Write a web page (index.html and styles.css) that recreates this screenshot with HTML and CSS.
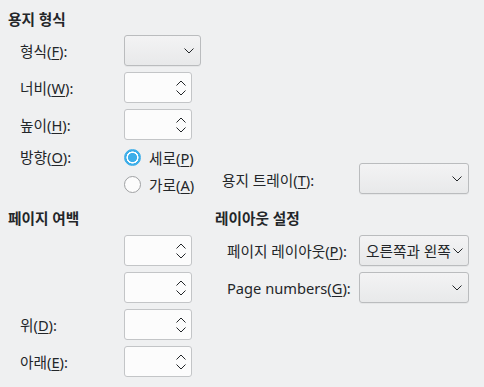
FILE: index.html
```html
<!DOCTYPE html>
<html lang="ko">
<head>
<meta charset="utf-8">
<title>페이지 설정</title>
<link rel="stylesheet" href="styles.css">
</head>
<body>
<div class="page">
  <section class="paper">
    <h2 class="heading">용지 형식</h2>
    <div class="paper-body">
      <div class="form paper-form">
        <div class="label">형식(<u>F</u>):</div>
        <div class="combo w77"><svg class="chev" width="10" height="6" viewBox="0 0 10 6"><path d="M0.5 0.5 L5 5 L9.5 0.5" fill="none" stroke="#232629" stroke-width="1"/></svg></div>

        <div class="label">너비(<u>W</u>):</div>
        <div class="spin"><svg width="10" height="6" viewBox="0 0 10 6"><path d="M0.5 5.5 L5 1 L9.5 5.5" fill="none" stroke="#232629" stroke-width="1"/></svg><svg width="10" height="6" viewBox="0 0 10 6"><path d="M0.5 0.5 L5 5 L9.5 0.5" fill="none" stroke="#232629" stroke-width="1"/></svg></div>

        <div class="label">높이(<u>H</u>):</div>
        <div class="spin"><svg width="10" height="6" viewBox="0 0 10 6"><path d="M0.5 5.5 L5 1 L9.5 5.5" fill="none" stroke="#232629" stroke-width="1"/></svg><svg width="10" height="6" viewBox="0 0 10 6"><path d="M0.5 0.5 L5 5 L9.5 0.5" fill="none" stroke="#232629" stroke-width="1"/></svg></div>

        <div class="label top">방향(<u>O</u>):</div>
        <div class="radios">
          <div class="radio-row"><span class="radio on"></span><span>세로(<u>P</u>)</span></div>
          <div class="radio-row"><span class="radio"></span><span>가로(<u>A</u>)</span></div>
        </div>
      </div>
      <div class="tray">
        <div class="tray-label">용지 트레이(<u>T</u>):</div>
        <div class="combo w110"><svg class="chev" width="10" height="6" viewBox="0 0 10 6"><path d="M0.5 0.5 L5 5 L9.5 0.5" fill="none" stroke="#232629" stroke-width="1"/></svg></div>
      </div>
    </div>
  </section>

  <div class="bottom">
    <section class="margins">
      <h2 class="heading">페이지 여백</h2>
      <div class="form margin-form">
        <div class="label"></div>
        <div class="spin"><svg width="10" height="6" viewBox="0 0 10 6"><path d="M0.5 5.5 L5 1 L9.5 5.5" fill="none" stroke="#232629" stroke-width="1"/></svg><svg width="10" height="6" viewBox="0 0 10 6"><path d="M0.5 0.5 L5 5 L9.5 0.5" fill="none" stroke="#232629" stroke-width="1"/></svg></div>

        <div class="label"></div>
        <div class="spin"><svg width="10" height="6" viewBox="0 0 10 6"><path d="M0.5 5.5 L5 1 L9.5 5.5" fill="none" stroke="#232629" stroke-width="1"/></svg><svg width="10" height="6" viewBox="0 0 10 6"><path d="M0.5 0.5 L5 5 L9.5 0.5" fill="none" stroke="#232629" stroke-width="1"/></svg></div>

        <div class="label">위(<u>D</u>):</div>
        <div class="spin"><svg width="10" height="6" viewBox="0 0 10 6"><path d="M0.5 5.5 L5 1 L9.5 5.5" fill="none" stroke="#232629" stroke-width="1"/></svg><svg width="10" height="6" viewBox="0 0 10 6"><path d="M0.5 0.5 L5 5 L9.5 0.5" fill="none" stroke="#232629" stroke-width="1"/></svg></div>

        <div class="label">아래(<u>E</u>):</div>
        <div class="spin"><svg width="10" height="6" viewBox="0 0 10 6"><path d="M0.5 5.5 L5 1 L9.5 5.5" fill="none" stroke="#232629" stroke-width="1"/></svg><svg width="10" height="6" viewBox="0 0 10 6"><path d="M0.5 0.5 L5 5 L9.5 0.5" fill="none" stroke="#232629" stroke-width="1"/></svg></div>
      </div>
    </section>

    <section class="layout">
      <h2 class="heading">레이아웃 설정</h2>
      <div class="form layout-form">
        <div class="label">페이지 레이아웃(<u>P</u>):</div>
        <div class="combo w110 with-text"><span class="combo-text">오른쪽과 왼쪽</span><svg class="chev" width="10" height="6" viewBox="0 0 10 6"><path d="M0.5 0.5 L5 5 L9.5 0.5" fill="none" stroke="#232629" stroke-width="1"/></svg></div>

        <div class="label">Page numbers(<u>G</u>):</div>
        <div class="combo w110"><svg class="chev" width="10" height="6" viewBox="0 0 10 6"><path d="M0.5 0.5 L5 5 L9.5 0.5" fill="none" stroke="#232629" stroke-width="1"/></svg></div>
      </div>
    </section>
  </div>
</div>
</body>
</html>
```

FILE: styles.css
```css
html, body {
  margin: 0;
  background: #eff0f1;
}

body {
  font-family: "Noto Sans", "Noto Sans CJK KR", sans-serif;
  font-size: 14.67px;
  color: #232629;
}

.page {
  padding: 9px 8px 0 8px;
}

.heading {
  margin: 0;
  font-size: 14.67px;
  font-weight: bold;
  line-height: 20px;
}

u {
  text-decoration-thickness: 1px;
  text-underline-offset: 2px;
}

.paper-body {
  display: flex;
  align-items: flex-end;
  margin-top: 6px;
  padding-left: 12px;
}

.form {
  display: grid;
  row-gap: 6px;
  align-items: center;
}

.paper-form {
  grid-template-columns: 104px 98px;
}

.label {
  line-height: 20px;
  white-space: nowrap;
}

.label.top {
  align-self: start;
  padding-top: 1px;
}

.combo {
  height: 31px;
  box-sizing: border-box;
  border: 1px solid #babcbe;
  border-radius: 3px;
  background: linear-gradient(#f3f3f4, #e8e9ea);
  box-shadow: 0 1px 0 rgba(0, 0, 0, 0.04);
  display: flex;
  align-items: center;
  justify-content: flex-end;
  padding-right: 6px;
}

.w77 { width: 77px; }
.w110 { width: 110px; }

.combo.with-text {
  justify-content: space-between;
  padding-left: 6px;
  padding-right: 5px;
}

.combo-text {
  white-space: nowrap;
  overflow: hidden;
  flex: 1 1 auto;
  min-width: 0;
  line-height: 20px;
}

.chev {
  flex: none;
  display: block;
}

.spin {
  width: 68px;
  height: 31px;
  box-sizing: border-box;
  background: #fcfcfc;
  border: 1px solid #c3c5c7;
  border-radius: 3px;
  display: flex;
  flex-direction: column;
  align-items: flex-end;
  justify-content: center;
  gap: 4px;
  padding-right: 5px;
}

.spin svg {
  display: block;
}

.radios {
  display: flex;
  flex-direction: column;
  gap: 7px;
  padding-top: 1px;
}

.radio-row {
  height: 20px;
  display: flex;
  align-items: center;
  gap: 8px;
  white-space: nowrap;
}

.radio {
  width: 17px;
  height: 17px;
  box-sizing: border-box;
  border-radius: 50%;
  border: 1px solid #9fa1a3;
  background: #fcfcfc;
  flex: none;
}

.radio.on {
  border-color: #3daee9;
  background: radial-gradient(circle at center, #3daee9 0 4.3px, #ffffff 4.8px 5.8px, #3daee9 6.3px);
}

.tray {
  display: flex;
  align-items: center;
}

.tray-label {
  width: 137px;
  white-space: nowrap;
  line-height: 20px;
  padding-top: 3px;
}

.bottom {
  display: flex;
  margin-top: 14px;
}

.margins {
  width: 207px;
}

.margin-form {
  margin-top: 7px;
  padding-left: 12px;
  grid-template-columns: 104px 68px;
}

.margin-form .label {
  min-height: 20px;
}

.layout-form {
  margin-top: 7px;
  padding-left: 12px;
  grid-template-columns: 132px 110px;
}
```
